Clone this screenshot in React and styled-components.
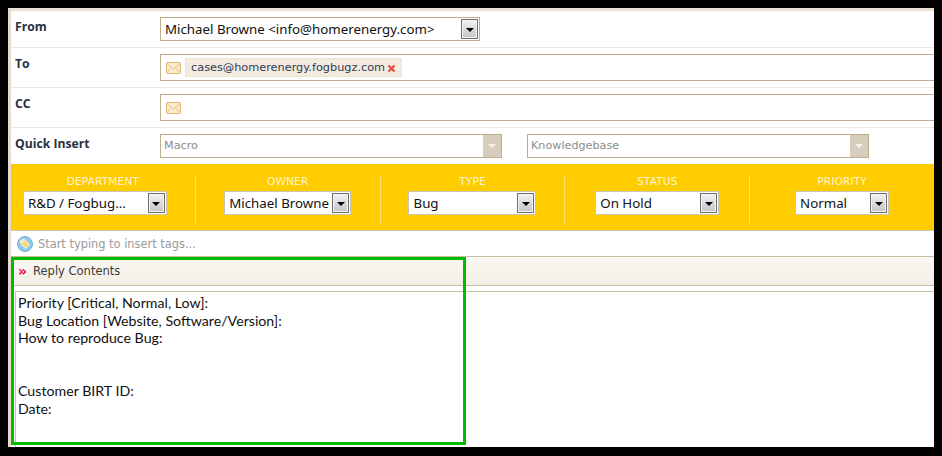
import React from 'react';
import styled, { createGlobalStyle } from 'styled-components';

const GlobalStyle = createGlobalStyle`
  html, body {
    margin: 0;
    padding: 0;
    background: #000;
  }
`;

const Frame = styled.div`
  width: 942px;
  height: 456px;
  padding: 8px 8px 9px 8px;
  box-sizing: border-box;
  background: #000;
  overflow: hidden;
`;

const Panel = styled.div`
  position: relative;
  height: 100%;
  background: #fff;
  border-top: 3px solid #e8e0d0;
  border-left: 3px solid #e4dccd;
  box-sizing: border-box;
  overflow: hidden;
  font-family: "DejaVu Sans", Verdana, sans-serif;
`;

const Row = styled.div`
  display: flex;
  height: ${props => props.$height}px;
  box-sizing: border-box;
  border-bottom: ${props => props.$plain ? 'none' : '1px solid #ece7dc'};
  padding-top: ${props => props.$top}px;
  padding-left: 4px;
`;

const Label = styled.div`
  width: 145px;
  flex-shrink: 0;
  padding-top: 1px;
  font-family: "Open Sans", "Noto Sans", sans-serif;
  font-weight: 700;
  font-size: 12.2px;
  line-height: 18px;
  color: #27313f;
`;

const SelectBox = styled.div`
  display: flex;
  align-items: center;
  justify-content: space-between;
  box-sizing: border-box;
  width: ${props => props.$width}px;
  height: 24px;
  flex-shrink: 0;
  margin-right: ${props => props.$shift || 0}px;
  padding: 0 1px 0 4px;
  background: #fff;
  border: 1px solid ${props => props.$light ? '#c9c4b4' : '#bfae8d'};
  font-family: "Noto Sans", "Open Sans", sans-serif;
  font-size: 13.3px;
  color: #111;
  white-space: nowrap;
`;

const ArrowButton = styled.span`
  display: flex;
  align-items: center;
  justify-content: center;
  box-sizing: border-box;
  width: 17px;
  height: 20px;
  flex-shrink: 0;
  border: 1px solid #6f6f6f;
  box-shadow: inset 0 0 0 1px #f4f4f4;
  background: linear-gradient(#f2f2f2, #c4c4c4);
  &::after {
    content: '';
    width: 0;
    height: 0;
    margin-top: 1px;
    border-left: 4px solid transparent;
    border-right: 4px solid transparent;
    border-top: 4px solid #000;
  }
`;

const AddressField = styled.div`
  flex: 1;
  display: flex;
  align-items: center;
  gap: 4px;
  height: 27px;
  box-sizing: border-box;
  padding-left: 5px;
  border: 1px solid #bfae8d;
  border-right: none;
`;

const Chip = styled.span`
  display: flex;
  align-items: center;
  justify-content: space-between;
  box-sizing: border-box;
  height: 19px;
  width: 217px;
  padding: 0 5px;
  background: #f3ebdf;
  border: 1px solid #ebe3d4;
  font-size: 11.3px;
  color: #2f3a52;
  white-space: nowrap;
`;

const ComboGroup = styled.div`
  display: flex;
  gap: 25px;
`;

const Combo = styled.div`
  display: flex;
  justify-content: space-between;
  box-sizing: border-box;
  width: 342px;
  height: 24px;
  border: 1px solid #bfae8d;
  font-size: 11.2px;
  line-height: 21px;
  color: #8d8d8d;
  padding-left: 3px;
`;

const ComboArrow = styled.span`
  display: flex;
  align-items: center;
  justify-content: center;
  width: 18px;
  background: #d8ccbc;
  &::after {
    content: '';
    width: 0;
    height: 0;
    border-left: 4px solid transparent;
    border-right: 4px solid transparent;
    border-top: 4px solid #f5f1ea;
  }
`;

const PropertyBar = styled.div`
  display: flex;
  height: 67px;
  padding-top: 11px;
  box-sizing: border-box;
  background: #ffcc00;
  border-bottom: 1px solid #cfc7a8;
`;

const Property = styled.div`
  flex: 1;
  height: 49px;
  display: flex;
  flex-direction: column;
  align-items: center;
  gap: 3px;
  border-left: ${props => props.$first ? 'none' : '1px solid #ffe068'};
`;

const PropertyLabel = styled.div`
  font-size: 10.5px;
  line-height: 13px;
  letter-spacing: 0.2px;
  color: #fff6d0;
`;

const TagRow = styled.div`
  display: flex;
  align-items: center;
  gap: 5px;
  height: 26px;
  box-sizing: border-box;
  padding-left: 6px;
  border-bottom: 1px solid #c9bda6;
  font-size: 11.4px;
  color: #9a9a9a;
`;

const ReplyHeader = styled.div`
  display: flex;
  align-items: center;
  gap: 6px;
  height: 29px;
  box-sizing: border-box;
  padding-left: 7px;
  background: linear-gradient(#faf8f3, #f3efe6);
  border-bottom: 1px solid #c9bda6;
  font-size: 11.5px;
  color: #3a3a3a;
`;

const Chevrons = styled.span`
  font-weight: 700;
  font-size: 14px;
  line-height: 14px;
  color: #e6005c;
`;

const ReplyBody = styled.div`
  margin: 5px 0 0 4px;
  height: 200px;
  padding: 2px 0 0 2px;
  border-top: 1px solid #c9bda6;
  border-left: 1px solid #c9bda6;
  font-family: Lato, "Open Sans", sans-serif;
  font-size: 14.2px;
  line-height: 17.6px;
  color: #111;
  white-space: pre-line;
`;

const Highlight = styled.div`
  position: absolute;
  left: 0;
  top: 246px;
  width: 455px;
  height: 188px;
  box-sizing: border-box;
  border: 3px solid #00bb00;
  pointer-events: none;
`;

const Envelope = () => (
  <svg width="15" height="12" viewBox="0 0 15 12" style={{ flexShrink: 0 }}>
    <rect x="0.5" y="0.5" width="14" height="11" rx="1.5" fill="#fbeccb" stroke="#e0b878" />
    <path d="M1 1.5 L7.5 7 L14 1.5 M1 10.5 L5.5 5.5 M14 10.5 L9.5 5.5" fill="none" stroke="#e3bf85" />
  </svg>
);

const RemoveIcon = () => (
  <svg width="9" height="9" viewBox="0 0 9 9" style={{ marginTop: 1 }}>
    <path d="M1.5 1.5 L7.5 7.5 M7.5 1.5 L1.5 7.5" stroke="#e8473c" strokeWidth="2.2" />
  </svg>
);

const TagIcon = () => (
  <svg width="16" height="16" viewBox="0 0 16 16">
    <circle cx="8" cy="8" r="7.5" fill="#92c8e8" stroke="#6fb0d8" />
    <path d="M3.5 5 L5 3.5 L7.5 3.5 L12.5 8.5 L8.5 12.5 L3.5 7.5 Z" fill="#f8d676" stroke="#fff" strokeWidth="0.8" />
    <circle cx="5.6" cy="5.6" r="1" fill="#fff" />
  </svg>
);

const properties = [
  { label: 'DEPARTMENT', value: 'R&D / Fogbug...', width: 144, shift: 16 },
  { label: 'OWNER', value: 'Michael Browne', width: 127 },
  { label: 'TYPE', value: 'Bug', width: 128 },
  { label: 'STATUS', value: 'On Hold', width: 124 },
  { label: 'PRIORITY', value: 'Normal', width: 94 },
];

const replyText = `Priority [Critical, Normal, Low]:
Bug Location [Website, Software/Version]:
How to reproduce Bug:


Customer BIRT ID:
Date:`;

export default function App() {
  return (
    <Frame>
      <GlobalStyle />
      <Panel>
        <Row $height={37} $top={6}>
          <Label>From</Label>
          <SelectBox $width={320}>
            Michael Browne &lt;info@homerenergy.com&gt;
            <ArrowButton />
          </SelectBox>
        </Row>
        <Row $height={40} $top={6}>
          <Label>To</Label>
          <AddressField>
            <Envelope />
            <Chip>
              cases@homerenergy.fogbugz.com
              <RemoveIcon />
            </Chip>
          </AddressField>
        </Row>
        <Row $height={40} $top={6}>
          <Label>CC</Label>
          <AddressField>
            <Envelope />
          </AddressField>
        </Row>
        <Row $height={36} $top={6} $plain>
          <Label>Quick Insert</Label>
          <ComboGroup>
            <Combo>
              Macro
              <ComboArrow />
            </Combo>
            <Combo>
              Knowledgebase
              <ComboArrow />
            </Combo>
          </ComboGroup>
        </Row>
        <PropertyBar>
          {properties.map((item, i) => (
            <Property key={item.label} $first={i === 0}>
              <PropertyLabel>{item.label}</PropertyLabel>
              <SelectBox $width={item.width} $shift={item.shift} $light>
                {item.value}
                <ArrowButton />
              </SelectBox>
            </Property>
          ))}
        </PropertyBar>
        <TagRow>
          <TagIcon />
          Start typing to insert tags...
        </TagRow>
        <ReplyHeader>
          <Chevrons>»</Chevrons>
          Reply Contents
        </ReplyHeader>
        <ReplyBody>{replyText}</ReplyBody>
        <Highlight />
      </Panel>
    </Frame>
  );
}
